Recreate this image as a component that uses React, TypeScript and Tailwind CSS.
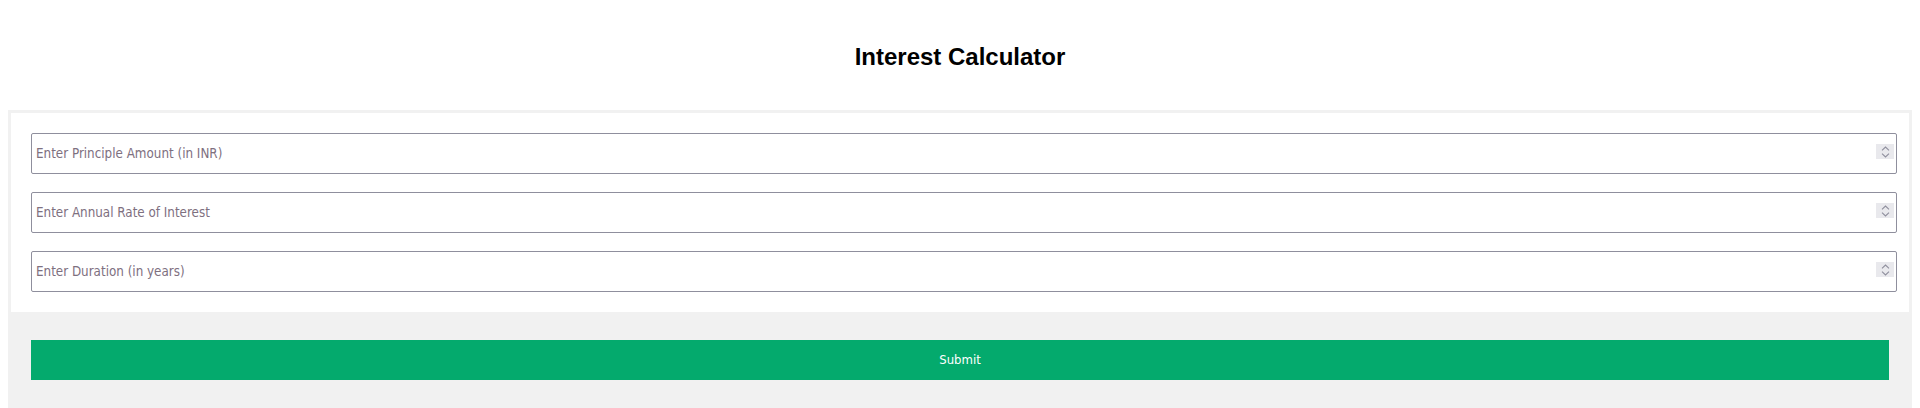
import React from "react";

const FIELDS = [
  "Enter Principle Amount (in INR)",
  "Enter Annual Rate of Interest",
  "Enter Duration (in years)",
];

const uiFont = {
  fontFamily: "'DejaVu Sans Condensed', 'DejaVu Sans', sans-serif",
} as const;

function Spinner() {
  return (
    <div className="pointer-events-none absolute right-[3px] top-[11px] flex h-[15px] w-[18px] flex-col items-center justify-center gap-[2px] bg-[#e9e9ed]">
      <svg width="9" height="5" viewBox="0 0 9 5" fill="none">
        <path d="M1 4.3 4.5 1l3.5 3.3" stroke="#8f8f9d" strokeWidth="1.1" />
      </svg>
      <svg width="9" height="5" viewBox="0 0 9 5" fill="none">
        <path d="M1 0.7 4.5 4 8 0.7" stroke="#8f8f9d" strokeWidth="1.1" />
      </svg>
    </div>
  );
}

function NumberField({ placeholder }: { placeholder: string }) {
  return (
    <div className="relative w-[1866px]">
      <input
        type="text"
        inputMode="decimal"
        placeholder={placeholder}
        style={uiFont}
        className="block h-[41px] w-full rounded-[2px] border border-[#8f8f9d] bg-white px-[4px] text-[13.3px] text-black outline-none placeholder:text-[#7e707f] [font-stretch:condensed]"
      />
      <Spinner />
    </div>
  );
}

export default function App() {
  return (
    <div className="min-h-[408px] bg-white">
      <div className="pt-[43px] pb-[40px]">
        <h2 className="text-center text-[24px] font-bold leading-[27px] text-black [font-family:'Liberation_Sans',Arial,sans-serif]">
          Interest Calculator
        </h2>
      </div>

      <form className="mx-[8px] bg-[#f1f1f1]" onSubmit={(e) => e.preventDefault()}>
        <div className="px-[3px] pt-[3px]">
          <div className="flex flex-col gap-[18px] bg-white pb-[20px] pl-[20px] pt-[20px]">
            {FIELDS.map((f) => (
              <NumberField key={f} placeholder={f} />
            ))}
          </div>
        </div>
        <div className="px-[23px] pb-[28px] pt-[28px]">
          <button
            type="submit"
            style={uiFont}
            className="block h-[40px] w-full bg-[#04aa6d] text-[13px] text-white [font-stretch:condensed]"
          >
            Submit
          </button>
        </div>
      </form>
    </div>
  );
}
